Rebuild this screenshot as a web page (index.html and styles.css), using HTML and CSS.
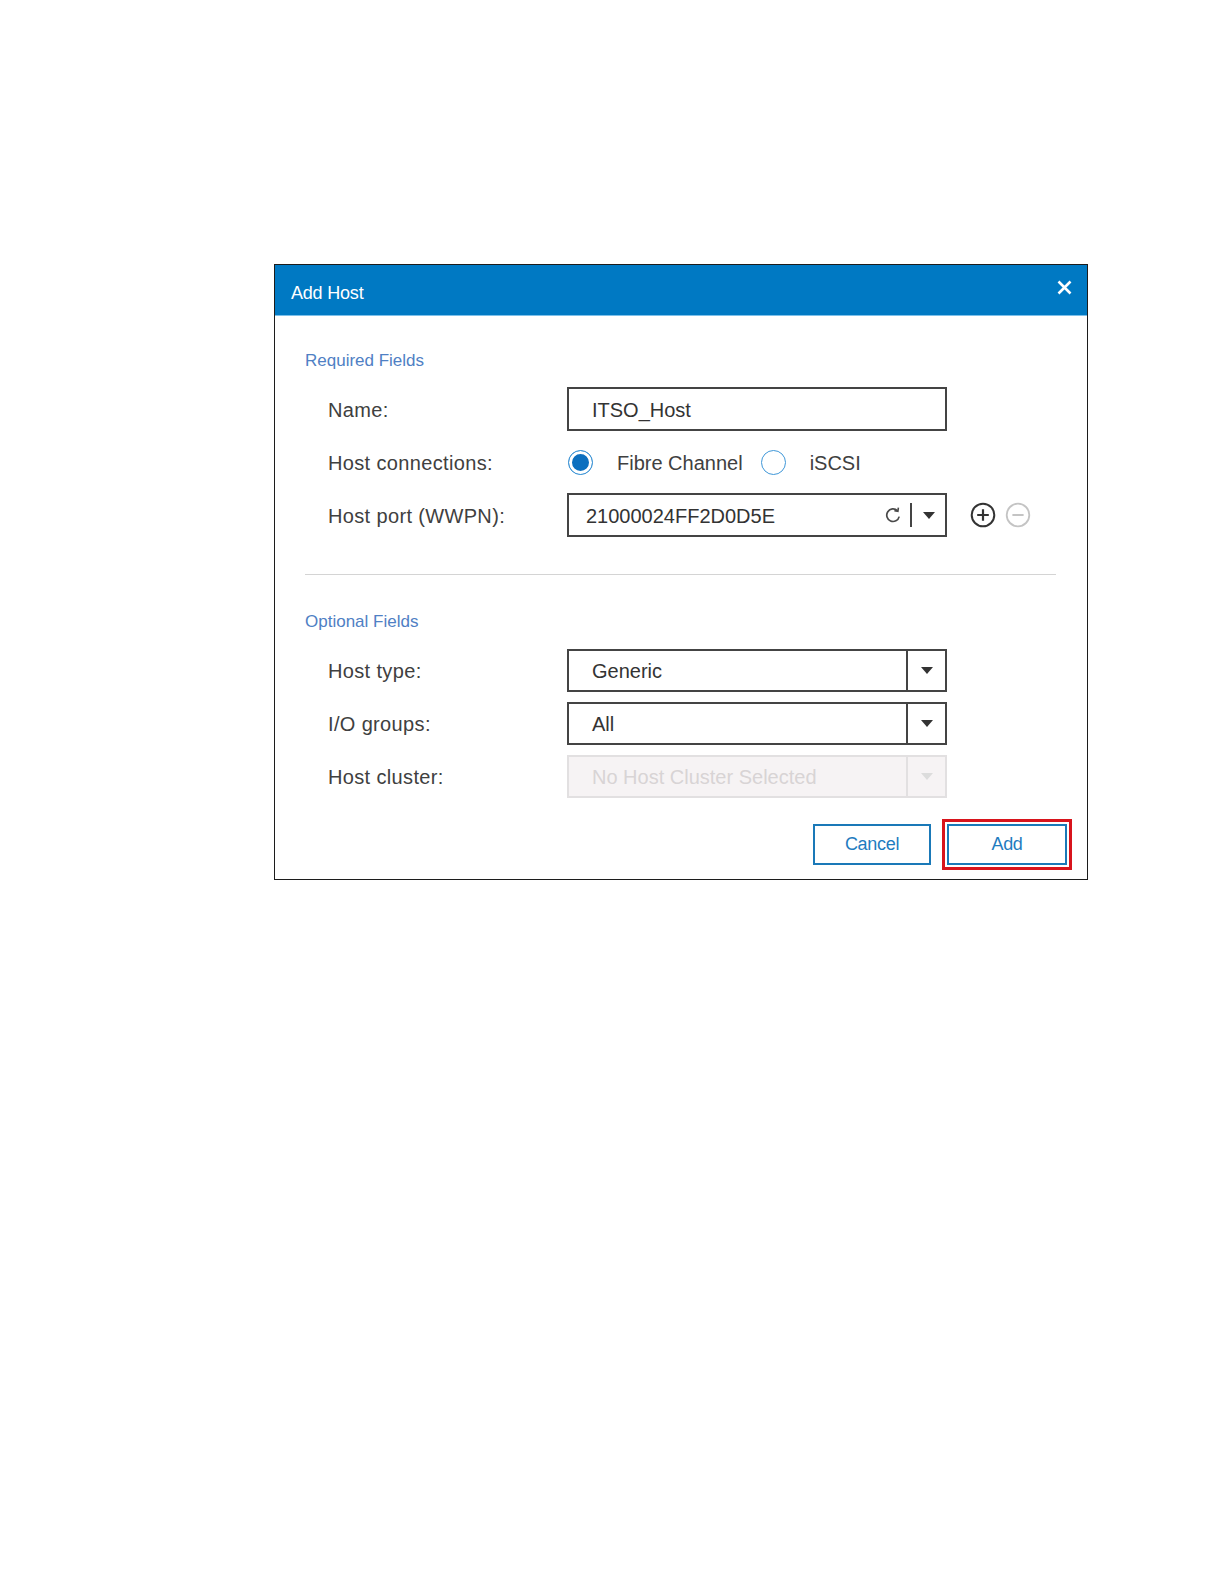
FILE: index.html
```html
<!DOCTYPE html>
<html>
<head>
	<meta charset="utf-8">
	<title>Add Host</title>
	<link rel="stylesheet" href="styles.css">
</head>
<body>
	<div class="page">
		<div class="dialog">
			<div class="dialog-head">
				<span class="dialog-title">Add Host</span>
				<svg class="close" width="15" height="15" viewBox="0 0 15 15"><path d="M1.5 1.5 L13.5 13.5 M13.5 1.5 L1.5 13.5" stroke="#fff" stroke-width="2.6" fill="none"/></svg>
			</div>
			<div class="dialog-body">
				<div class="section-title">Required Fields</div>
				<div class="row">
					<label>Name:</label>
					<div class="field"><span class="value">ITSO_Host</span></div>
				</div>
				<div class="row">
					<label>Host connections:</label>
					<div class="radios">
						<span class="radio on"></span><span class="radio-text">Fibre Channel</span>
						<span class="radio"></span><span class="radio-text">iSCSI</span>
					</div>
				</div>
				<div class="row">
					<label>Host port (WWPN):</label>
					<div class="field port">
						<span class="value">21000024FF2D0D5E</span>
						<!-- 刷新图标 -->
						<svg class="refresh" width="18" height="18" viewBox="0 0 18 18"><path d="M13.4 4.6 A6.3 6.3 0 1 0 15.2 10.6" stroke="#4a4a4a" stroke-width="1.7" fill="none"/><path d="M14.4 1.6 L13.9 5.2 L10.4 4.6" stroke="#4a4a4a" stroke-width="1.6" fill="none"/></svg>
						<span class="vbar"></span>
						<svg class="caret-icon" width="12" height="7" viewBox="0 0 12 7"><polygon points="0,0 12,0 6,7" fill="#333"/></svg>
					</div>
					<div class="port-actions">
						<svg width="26" height="26" viewBox="0 0 26 26"><circle cx="13" cy="13" r="11.3" stroke="#333" stroke-width="2" fill="none"/><path d="M13 7.2 V18.8 M7.2 13 H18.8" stroke="#333" stroke-width="2.2"/></svg>
						<svg width="26" height="26" viewBox="0 0 26 26"><circle cx="13" cy="13" r="11.3" stroke="#c4c4c4" stroke-width="1.8" fill="none"/><path d="M7.4 13 H18.6" stroke="#c4c4c4" stroke-width="2"/></svg>
					</div>
				</div>

				<div class="divider"></div>

				<div class="section-title">Optional Fields</div>
				<div class="row opt">
					<label>Host type:</label>
					<div class="field select">
						<span class="value">Generic</span>
						<span class="caret"><svg width="12" height="7" viewBox="0 0 12 7"><polygon points="0,0 12,0 6,7" fill="#333"/></svg></span>
					</div>
				</div>
				<div class="row opt">
					<label>I/O groups:</label>
					<div class="field select">
						<span class="value">All</span>
						<span class="caret"><svg width="12" height="7" viewBox="0 0 12 7"><polygon points="0,0 12,0 6,7" fill="#333"/></svg></span>
					</div>
				</div>
				<div class="row opt last">
					<label>Host cluster:</label>
					<div class="field select disabled">
						<span class="value">No Host Cluster Selected</span>
						<span class="caret"><svg width="12" height="7" viewBox="0 0 12 7"><polygon points="0,0 12,0 6,7" fill="#dcdcdc"/></svg></span>
					</div>
				</div>
			</div>
			<div class="dialog-foot">
				<button class="btn">Cancel</button>
				<button class="btn add">Add</button>
			</div>
		</div>
	</div>
</body>
</html>
```

FILE: styles.css
```css
*{margin: 0;padding: 0;box-sizing: border-box;}
body{
	background: #fff;
	font-family: "Liberation Sans", Arial, sans-serif;
	color: #3c3c3c;
}
.page{
	padding: 264px 0 0 274px;
}
.dialog{
	width: 814px;
	border: 1px solid #1c1c1c;
	background: #fff;
}
.dialog-head{
	height: 51px;
	background: #0079c3;
	border-bottom: 1px solid #7cc0ea;
	display: flex;
	align-items: center;
	justify-content: space-between;
	padding: 0 15px 0 16px;
}
.dialog-title{
	color: #fff;
	font-size: 18px;
	padding-top: 7px;
	letter-spacing: -0.2px;
}
.close{
	margin-top: -5px;
}
.dialog-body{
	padding: 0 31px 0 30px;
}
.section-title{
	font-size: 17px;
	line-height: 20px;
	color: #4f80c4;
	margin-top: 35px;
	margin-bottom: 16px;
}
.divider{
	height: 1px;
	background: #d4d4d4;
	margin-top: 37px;
}
.divider + .section-title{
	margin-top: 37px;
	margin-bottom: 17px;
}
.row{
	display: flex;
	align-items: center;
	height: 44px;
	padding-left: 23px;
	margin-bottom: 9px;
	font-size: 20px;
}
.row.opt{
	height: 43px;
	margin-bottom: 10px;
}
.row.last{
	margin-bottom: 0;
}
.row label{
	width: 239px;
	color: #404040;
	letter-spacing: 0.35px;
	padding-top: 2px;
}
.field{
	width: 380px;
	height: 100%;
	border: 2px solid #444;
	display: flex;
	align-items: center;
	color: #333;
}
.field .value{
	padding-left: 23px;
	padding-top: 2px;
	flex: 1;
}
.field.port .value{
	padding-left: 17px;
}
.refresh{
	margin-right: 8px;
}
.vbar{
	width: 2px;
	height: 24px;
	background: #444;
	margin-right: 11px;
}
.caret-icon{
	margin-right: 10px;
}
.port-actions{
	display: flex;
	gap: 9px;
	margin-left: 23px;
}
.radios{
	display: flex;
	align-items: center;
	padding-left: 1px;
}
.radio{
	width: 25px;
	height: 25px;
	border-radius: 50%;
	border: 1.5px solid #3f97d8;
	background: #fff;
}
.radio.on{
	background: #0b6fbf;
	box-shadow: inset 0 0 0 3px #fff;
}
.radio-text{
	margin-left: 24px;
	margin-right: 18px;
	padding-top: 2px;
	color: #404040;
}
.select .caret{
	width: 39px;
	height: 100%;
	border-left: 2px solid #444;
	display: flex;
	align-items: center;
	justify-content: center;
}
.select.disabled{
	background: #f6f3f4;
	border-color: #e2e0e1;
	color: #d8d4d5;
}
.select.disabled .caret{
	border-left-color: #e2e0e1;
}
.dialog-foot{
	display: flex;
	justify-content: flex-end;
	gap: 16px;
	padding: 26px 20px 14px 0;
}
.btn{
	width: 118px;
	height: 41px;
	border: 2px solid #1a79b8;
	background: #fff;
	color: #1f7cbf;
	font-family: "Liberation Sans", Arial, sans-serif;
	font-size: 18px;
	letter-spacing: -0.3px;
}
.btn.add{
	width: 120px;
	/* 红框标注 */
	outline: 3px solid #d8141c;
	outline-offset: 2px;
}
```
